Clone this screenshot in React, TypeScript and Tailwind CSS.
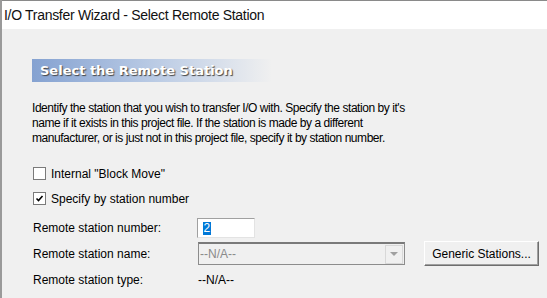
import React from 'react';

const sunken = 'border border-t-[#a0a0a0] border-l-[#a0a0a0] border-b-[#e3e3e3] border-r-[#e3e3e3]';

function CheckRow({ label, checked }: { label: string; checked?: boolean }) {
  return (
    <div className="flex items-center h-[13px]">
      <div className="w-[13px] h-[13px] border border-[#7a7a7a] bg-white flex items-center justify-center">
        {checked && (
          <svg width="9" height="9" viewBox="0 0 9 9">
            <path d="M1.5 4.5 L3.5 6.5 L7.5 2" stroke="#000" strokeWidth="1.6" fill="none" />
          </svg>
        )}
      </div>
      <span className="ml-[5px]">{label}</span>
    </div>
  );
}

export default function App() {
  return (
    <div
      className="w-[547px] h-[298px] bg-[#f0f0f0] text-black overflow-hidden flex flex-col border-l-2 border-l-[#9a9a9a]"
      style={{ fontFamily: '"Liberation Sans", Arial, sans-serif' }}
    >
      {/* title bar */}
      <div className="h-[29px] bg-white border-t border-t-[#8a8a8a] flex items-center pl-[2px]">
        <span className="text-[14px] text-[#111] tracking-[-0.3px]">I/O Transfer Wizard - Select Remote Station</span>
      </div>

      <div className="pl-[30px] flex flex-col text-[12px]">
        {/* heading band */}
        <div className="mt-[30px] h-[23px] w-[240px] bg-gradient-to-r from-[#85a2d1] via-[#b9cae4] to-[#f0f0f0] flex items-center pl-[8px]">
          <span
            className="text-white font-bold text-[13px] [text-shadow:1px_1px_1px_#444]"
            style={{ fontFamily: '"DejaVu Sans", Verdana, sans-serif' }}
          >
            Select the Remote Station
          </span>
        </div>

        {/* description */}
        <p className="mt-[19px] leading-[15px] w-[400px] tracking-[-0.45px]">
          Identify the station that you wish to transfer I/O with. Specify the station by it's name if it exists in
          this project file. If the station is made by a different manufacturer, or is just not in this project file,
          specify it by station number.
        </p>

        {/* checkboxes */}
        <div className="mt-[21px] pl-[1px] flex flex-col gap-[12px]">
          <CheckRow label={'Internal "Block Move"'} />
          <CheckRow label="Specify by station number" checked />
        </div>

        {/* fields */}
        <div className="mt-[13px] pl-[1px] grid grid-cols-[164px_auto] items-center">
          <span>Remote station number:</span>
          <div className={`w-[58px] h-[20px] bg-white ${sunken} flex items-center pl-[5px]`}>
            <span className="bg-[#0078d7] text-white leading-[13px] px-[0.5px]">2</span>
          </div>
        </div>

        <div className="mt-[3px] pl-[1px] flex items-center">
          <span className="w-[165px]">Remote station name:</span>
          <div className="w-[207px] h-[23px] border border-[#8c8c8c] border-t-2 border-t-[#7a7a7a] bg-[#f0f0f0] flex items-center">
            <span className="pl-[1px] text-[#8a8a8a] flex-1">--N/A--</span>
            <div className="w-[18px] h-[19px] mr-[1px] border border-[#d8d8d8] flex items-center justify-center">
              <svg width="8" height="5" viewBox="0 0 8 5">
                <path d="M0 0 L8 0 L4 4 Z" fill="#a0a0a0" />
              </svg>
            </div>
          </div>
          <button className="ml-[19px] w-[115px] h-[25px] bg-[#f0f0f0] border border-t-white border-l-white border-b-[#6e6e6e] border-r-[#6e6e6e] shadow-[inset_-1px_-1px_0_#a0a0a0] text-[12px] text-black">
            Generic Stations...
          </button>
        </div>

        <div className="mt-[5px] pl-[1px] flex items-center">
          <span className="w-[165px]">Remote station type:</span>
          <span>--N/A--</span>
        </div>
      </div>
    </div>
  );
}
